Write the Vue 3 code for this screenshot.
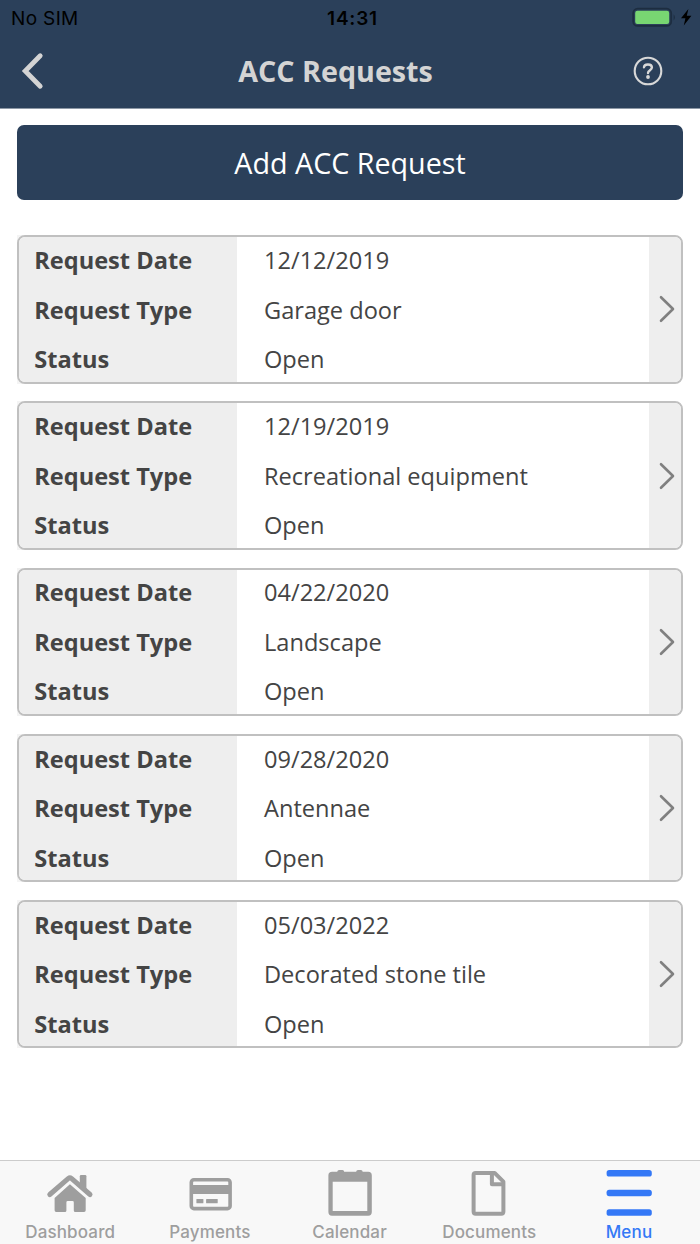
<template>
  <div class="screen">
    <header class="header">
      <div class="status-bar">
        <span class="carrier">No SIM</span>
        <span class="clock">14:31</span>
        <svg class="battery" width="62" height="22" viewBox="0 0 62 22">
          <rect x="1.2" y="1.7" width="38" height="17.2" rx="4.5" fill="none" stroke="#1d2d40" stroke-width="1.8" />
          <rect x="3.2" y="3.7" width="34" height="13.2" rx="2.2" fill="#78d672" />
          <path d="M41.6 7.2 Q44.2 10.3 41.6 13.4 Z" fill="#1d2d40" />
          <path d="M56.4 1.9 L49 11.2 L53.4 11.2 L51.8 18.6 L59.4 8.8 L54.8 8.8 Z" fill="#000" />
        </svg>
      </div>
      <div class="nav-bar">
        <svg class="back" width="24" height="38" viewBox="0 0 24 38">
          <path d="M20.2 3.7 L5.2 19 L20.2 34.3" fill="none" stroke="#d4d4d4" stroke-width="4.8" stroke-linecap="round" stroke-linejoin="miter" />
        </svg>
        <h1 class="title">ACC Requests</h1>
        <svg class="help" width="30" height="30" viewBox="0 0 30 30" fill="none" stroke="#d8d8d8">
          <circle cx="15" cy="15" r="13.3" stroke-width="2.1" />
          <path d="M11 11.2 C11.2 7.6 18.9 7.5 18.9 11.6 C18.9 14.2 15 14.2 15 17" stroke-width="2.4" stroke-linecap="round" />
          <circle cx="15" cy="21" r="1.9" fill="#d8d8d8" stroke="none" />
        </svg>
      </div>
    </header>

    <main class="content">
      <button class="add-button">Add ACC Request</button>
      <div class="requests">
        <div v-for="request in requests" :key="request.date" class="request-wrap">
          <div class="request">
            <div class="labels">
              <div>Request Date</div>
              <div>Request Type</div>
              <div>Status</div>
            </div>
            <div class="values">
              <div>{{ request.date }}</div>
              <div>{{ request.type }}</div>
              <div>{{ request.status }}</div>
            </div>
            <div class="arrow">
              <svg width="18" height="28" viewBox="0 0 18 28">
                <path d="M3 2.2 L15 14 L3 25.8" fill="none" stroke="#808080" stroke-width="2.6" stroke-linecap="round" stroke-linejoin="round" />
              </svg>
            </div>
          </div>
        </div>
      </div>
    </main>

    <nav class="tabs">
      <div v-for="tab in tabs" :key="tab" class="tab" :class="{ active: tab === 'Menu' }">
        <svg width="50" height="50" viewBox="0 0 50 50">
          <g v-if="tab === 'Dashboard'" fill="currentColor">
            <path d="M4.8 24.5 L23.4 8.4 Q24.9 7.2 26.4 8.4 L45 24.5" fill="none" stroke="currentColor" stroke-width="5" stroke-linecap="round" />
            <path d="M34.8 6.2 Q34.8 5 36 5 H40.2 Q41.4 5 41.4 6.2 V23 L34.8 17.5 Z" />
            <path d="M24.9 14.2 L40.7 28 V40.3 Q40.7 41.9 39.1 41.9 H30.3 Q28.8 41.9 28.8 40.4 V32.4 Q28.8 31.1 27.5 31.1 H22.7 Q21.4 31.1 21.4 32.4 V40.4 Q21.4 41.9 19.9 41.9 H11.2 Q9.6 41.9 9.6 40.3 V28 Z" />
          </g>
          <g v-else-if="tab === 'Payments'" fill="currentColor">
            <rect x="6.3" y="9.8" width="38.8" height="28.8" rx="2.6" fill="none" stroke="currentColor" stroke-width="3.6" />
            <path d="M5 15 H46 V24 H5 Z" />
            <rect x="11.4" y="29" width="7" height="4.3" rx=".6" />
            <rect x="21.1" y="29" width="11.6" height="4.3" rx=".6" />
          </g>
          <path
            v-else-if="tab === 'Calendar'"
            fill="currentColor"
            fill-rule="evenodd"
            d="M7.2 1.8 H12.2 Q12.5 0 14 0 H17.5 Q19 0 19.2 1.8 H31.1 Q31.4 0 33 0 H36 Q37.4 0 37.7 1.8 H43.2 Q46.8 1.8 46.8 5.4 V42.1 Q46.8 45.7 43.2 45.7 H7 Q3.4 45.7 3.4 42.1 V5.4 Q3.4 1.8 7.2 1.8 Z M7.7 11.7 V41 H42.3 V11.7 Z"
          />
          <g v-else-if="tab === 'Documents'" fill="none" stroke="currentColor" stroke-width="4" stroke-linejoin="round">
            <path d="M11.8 2.9 H30.6 L39.4 11.7 V41.5 Q39.4 43.7 37.2 43.7 H11.8 Q9.6 43.7 9.6 41.5 V5.1 Q9.6 2.9 11.8 2.9 Z" />
            <path d="M27.9 3.4 V14.2 H39" />
          </g>
          <g v-else fill="currentColor">
            <rect x="2.6" y=".1" width="45.2" height="6.5" rx="2.6" />
            <rect x="2.6" y="19.7" width="45.2" height="6.5" rx="2.6" />
            <rect x="2.6" y="39.3" width="45.2" height="6.5" rx="2.6" />
          </g>
        </svg>
        <span>{{ tab }}</span>
      </div>
    </nav>
  </div>
</template>

<script setup>
const requests = [
  { date: '12/12/2019', type: 'Garage door', status: 'Open' },
  { date: '12/19/2019', type: 'Recreational equipment', status: 'Open' },
  { date: '04/22/2020', type: 'Landscape', status: 'Open' },
  { date: '09/28/2020', type: 'Antennae', status: 'Open' },
  { date: '05/03/2022', type: 'Decorated stone tile', status: 'Open' },
]

const tabs = ['Dashboard', 'Payments', 'Calendar', 'Documents', 'Menu']
</script>

<style>
body {
  margin: 0;
  background: #fff;
}
</style>

<style scoped>
.screen {
  display: flex;
  flex-direction: column;
  height: 1244px;
  overflow: hidden;
  font-family: "Open Sans", sans-serif;
  color: #444;
}

.header {
  height: 108px;
  flex: none;
  border-bottom: 1px solid #8d98a5;
  background: #2b405a;
}

.status-bar {
  display: grid;
  grid-template-columns: 1fr auto 1fr;
  height: 36px;
  padding: 0 6px 0 11px;
  box-sizing: border-box;
  align-items: center;
  font-family: Inter, sans-serif;
  font-size: 19px;
  color: #000;
}

.carrier {
  letter-spacing: 0.35px;
}

.clock {
  font-weight: 600;
  letter-spacing: 0.8px;
}

.battery {
  justify-self: end;
}

.nav-bar {
  display: grid;
  grid-template-columns: 60px 1fr 67px;
  align-items: center;
  height: 70px;
  padding: 0 0 0 20px;
}

.title {
  margin: 0;
  padding-right: 42px;
  text-align: center;
  font-size: 28.7px;
  line-height: 38px;
  font-weight: 700;
  color: #d4d4d4;
}

.content {
  flex: 1;
  padding: 16.2px 17px 0;
}

.add-button {
  display: block;
  width: 100%;
  height: 74.5px;
  border: 0;
  border-radius: 7px;
  padding: 0 0 0.6px;
  background: #2b405a;
  color: #fff;
  font-family: inherit;
  font-size: 28.7px;
}

.requests {
  display: flex;
  flex-direction: column;
  gap: 17.8px;
  margin-top: 35.5px;
}

/* left corners sit on a pale square, right ones on white */
.request-wrap {
  height: 148.4px;
  background: linear-gradient(90deg, #f4f4f4 50%, #fff 50%);
}

.request {
  display: flex;
  height: 100%;
  box-sizing: border-box;
  border: 2px solid #c0c0c0;
  border-radius: 8px;
  overflow: hidden;
  background: #fff;
  font-size: 23.6px;
  line-height: 49.5px;
}

.labels {
  width: 218px;
  flex: none;
  padding-left: 15.2px;
  box-sizing: border-box;
  margin-bottom: -5px;
  background: #eee;
  font-weight: 700;
}

.labels div:first-child,
.values div:first-child {
  margin-top: -1.2px;
}

.values {
  flex: 1;
  padding-left: 27px;
}

.arrow {
  display: flex;
  align-items: center;
  justify-content: center;
  width: 32px;
  flex: none;
  padding-left: 4px;
  box-sizing: border-box;
  background: #eee;
}

.tabs {
  display: grid;
  grid-template-columns: repeat(5, 139.7px);
  height: 84px;
  padding-left: 0.4px;
  box-sizing: border-box;
  border-top: 1px solid #ccc;
  background: #f8f8f8;
  font-family: Inter, sans-serif;
}

.tab {
  display: flex;
  flex-direction: column;
  align-items: center;
  padding-top: 9px;
  color: #9e9e9e;
  font-size: 17px;
  line-height: 25px;
  font-weight: 500;
  letter-spacing: 0.15px;
}

.tab.active {
  color: #3478f6;
}
</style>
